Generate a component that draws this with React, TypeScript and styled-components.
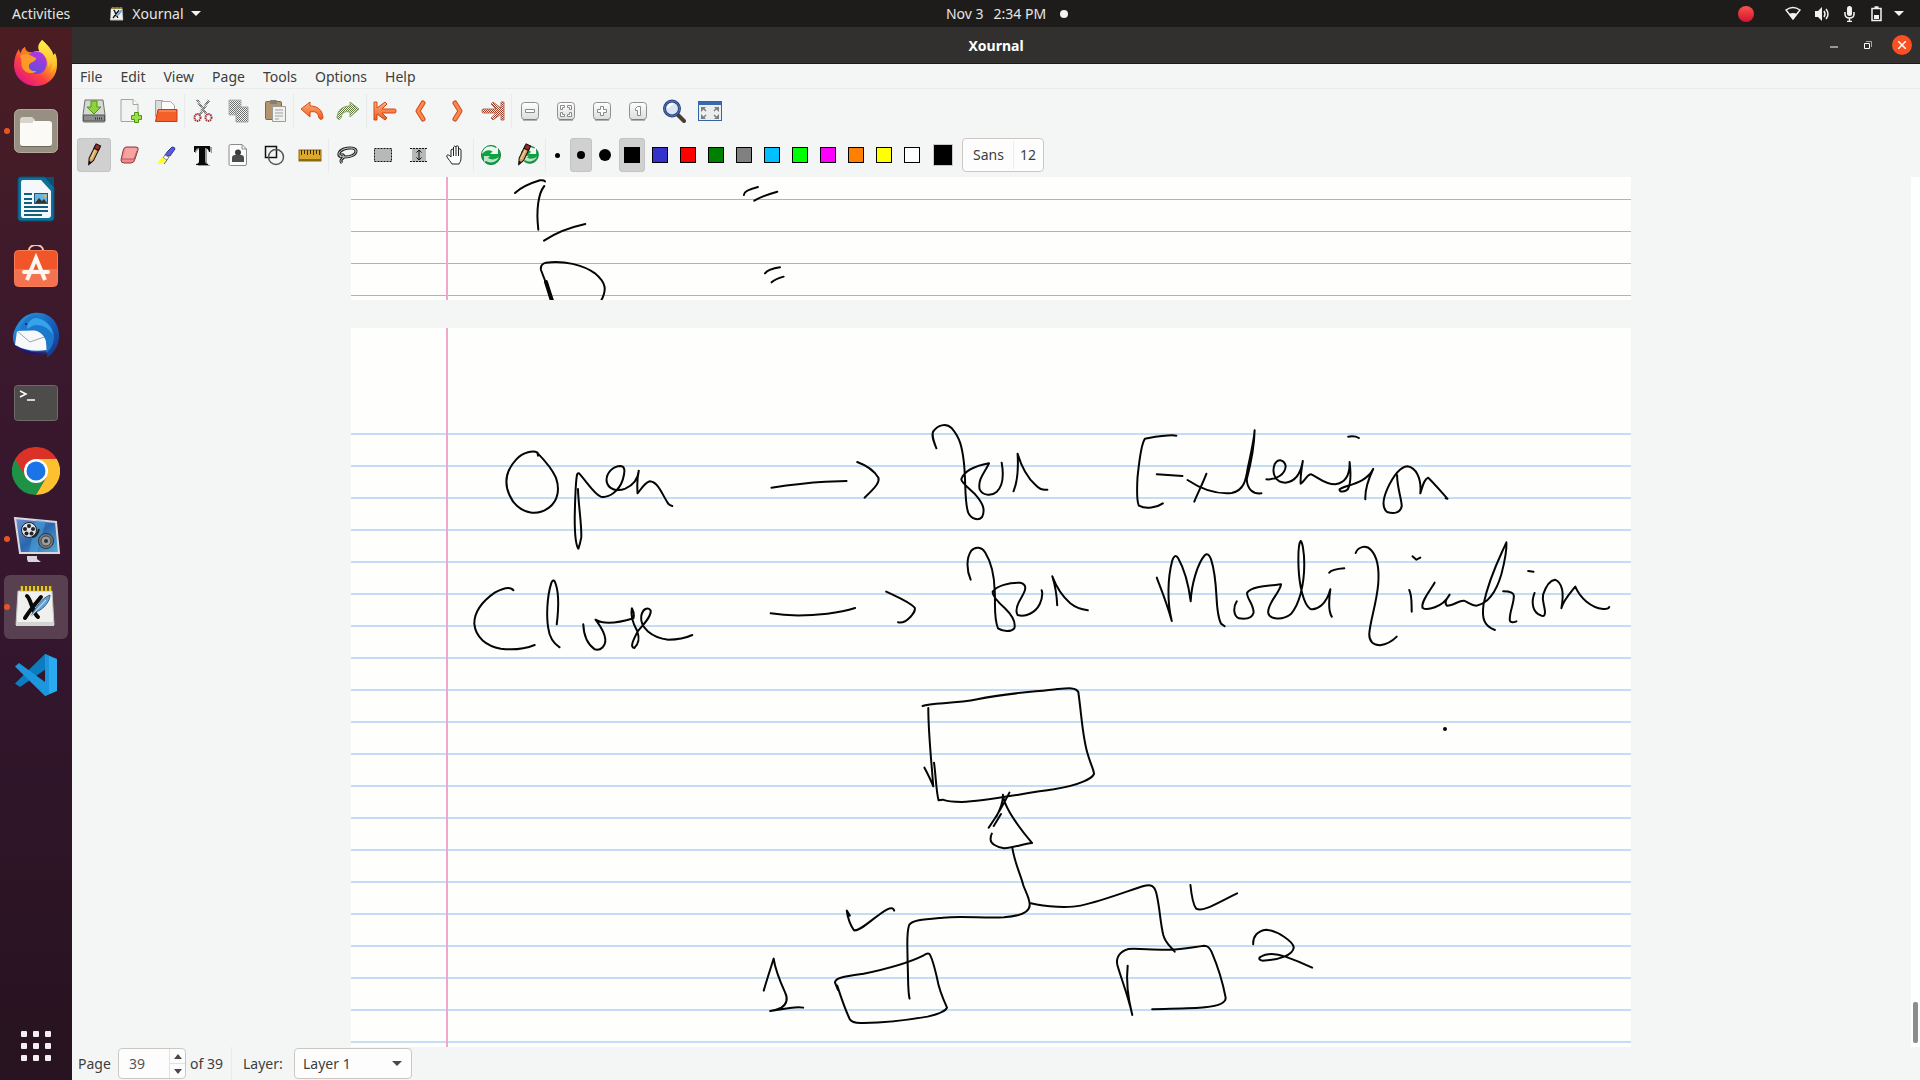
import React from "react";
import styled, { createGlobalStyle } from "styled-components";

const GlobalStyle = createGlobalStyle`
  * { box-sizing: border-box; }
  html, body, #root { height: 100%; margin: 0; }
  body { overflow: hidden; background: #f4f6f6; }
  body, button, input, select {
    font-family: "Noto Sans", "Open Sans", sans-serif;
    font-size: 14px;
    color: #3d3d3d;
  }
  button { border: 0; padding: 0; background: none; }
  svg { display: block; flex: none; }
`;

const Desktop = styled.div`
  height: 100%;
  display: flex;
  flex-direction: column;
`;

const TopBar = styled.header`
  height: 27px;
  flex: none;
  display: grid;
  grid-template-columns: minmax(0, 1fr) auto minmax(0, 1fr);
  align-items: center;
  padding: 0 16px 0 12px;
  background: #1d1c1a;
`;

const TopButton = styled.button`
  display: flex;
  align-items: center;
  gap: 7px;
  line-height: 20px;
  color: #e6e6e4;
`;

const TopLeft = styled.div`
  display: flex;
  gap: 39px;
`;

const Clock = styled(TopButton)`
  gap: 10px;
  margin-left: 98px;
`;

const Tray = styled.div`
  display: flex;
  justify-content: flex-end;
  align-items: center;
  gap: 8px;
`;

const RecordDot = styled.span`
  width: 16px;
  height: 16px;
  margin-right: 22px;
  border-radius: 50%;
  background: linear-gradient(#f8544f, #d3122c);
`;

const NoticeDot = styled.span`
  width: 8px;
  height: 8px;
  margin-left: 4px;
  border-radius: 50%;
  background: #f2f2f0;
`;

const Workspace = styled.div`
  flex: 1;
  min-height: 0;
  display: flex;
`;

const Dock = styled.nav`
  width: 72px;
  flex: none;
  display: flex;
  flex-direction: column;
  align-items: center;
  gap: 4px;
  padding: 4px 4px 2px;
  background: linear-gradient(#4b1d22 0%, #431b28 14%, #3a182d 32%, #33162d 60%, #27131f 100%);
`;

const DockItem = styled.button<{ $active?: boolean; $running?: boolean }>`
  position: relative;
  width: 64px;
  height: 64px;
  flex: none;
  display: grid;
  place-items: center;
  border-radius: 6px;
  background: ${(p) => (p.$active ? "#584050" : "transparent")};
  &::before {
    content: "";
    display: ${(p) => (p.$running ? "block" : "none")};
    position: absolute;
    left: 0;
    top: 29px;
    width: 6px;
    height: 6px;
    border-radius: 50%;
    background: #e95420;
  }
`;

const DockSpacer = styled.div`
  flex: 1;
`;

const Window = styled.main`
  flex: 1;
  min-width: 0;
  display: flex;
  flex-direction: column;
  background: #f4f6f6;
`;

const TitleBar = styled.div`
  height: 37px;
  flex: none;
  display: grid;
  grid-template-columns: 1fr auto 1fr;
  align-items: center;
  padding: 0 8px;
  background: #32302f;
  border-bottom: 1px solid #1c1b1a;
`;

const Title = styled.h1`
  grid-column: 2;
  margin: 0;
  padding-top: 2px;
  font-size: 14px;
  line-height: 20px;
  font-weight: 700;
  color: #fff;
`;

const WindowButtons = styled.div`
  display: flex;
  justify-content: flex-end;
  align-items: center;
  gap: 14px;
`;

const WindowButton = styled.button<{ $close?: boolean }>`
  width: 20px;
  height: 20px;
  display: grid;
  place-items: center;
  border-radius: 50%;
  background: ${(p) => (p.$close ? "#fa5022" : "transparent")};
`;

const MenuBar = styled.nav`
  height: 25px;
  flex: none;
  display: flex;
  align-items: center;
  gap: 18px;
  padding: 2px 8px 0;
  border-bottom: 1px solid #e9ebeb;
`;

const MenuItem = styled.button`
  line-height: 20px;
`;

const Toolbar = styled.div`
  height: 44px;
  flex: none;
  display: flex;
  align-items: center;
  padding: 0 4px;
`;

const ToolButton = styled.button<{ $active?: boolean; $width?: number }>`
  width: ${(p) => p.$width ?? 34}px;
  height: 34px;
  flex: none;
  margin: 0 1px;
  display: grid;
  place-items: center;
  border-radius: 4px;
  background: ${(p) => (p.$active ? "#d0d0d0" : "transparent")};
  box-shadow: ${(p) => (p.$active ? "inset 0 0 0 1px #c4c4c4" : "none")};
`;

const Separator = styled.span<{ $flush?: boolean }>`
  width: 1px;
  height: 34px;
  margin-right: ${(p) => (p.$flush ? -1 : 0)}px;
  background: #e9ebeb;
`;

const Swatches = styled.div`
  display: flex;
  margin: 0 7px 0 1px;
`;

const Swatch = styled.span<{ $color: string }>`
  width: 16px;
  height: 16px;
  border: 1px solid #000;
  background: ${(p) => p.$color};
`;

const ColorButton = styled.button`
  width: 20px;
  height: 22px;
  border: 1px solid #c9c9c9;
  background: #000;
`;

const Dot = styled.span<{ $size: number }>`
  width: ${(p) => p.$size}px;
  height: ${(p) => p.$size}px;
  border-radius: 50%;
  background: #000;
`;

const FontButton = styled.button`
  height: 34px;
  margin-left: 9px;
  display: flex;
  align-items: center;
  border: 1px solid #cdc7c2;
  border-radius: 4px;
  background: #fdfdfd;
  span { padding: 0 7px 0 6px; line-height: 28px; }
  span:first-child { padding: 0 9px 0 10px; border-right: 1px solid #ececec; }
`;

const Body = styled.section`
  flex: 1;
  min-height: 0;
  display: flex;
`;

const Pages = styled.div`
  flex: 1;
  min-width: 0;
  display: flex;
  flex-direction: column;
  align-items: center;
  gap: 28px;
  overflow: hidden;
`;

const Paper = styled.article<{ $tail?: boolean }>`
  position: relative;
  width: 1280px;
  max-width: 100%;
  overflow: hidden;
  flex: ${(p) => (p.$tail ? "0 0 123px" : "1")};
  background:
    linear-gradient(90deg, transparent 95px, #f2a6cb 95px, #f2a6cb 97px, transparent 97px),
    ${(p) =>
      p.$tail
        ? "repeating-linear-gradient(transparent 0 22px, #8bbddf 22px 23px, transparent 23px 32px)"
        : "repeating-linear-gradient(transparent 0 30px, #c4dcf4 30px 32px) 0 75px no-repeat"},
    #fefefd;
`;

const Ink = styled.svg`
  width: 100%;
  height: 100%;
  fill: none;
  stroke: #050505;
  stroke-width: 2;
  stroke-linecap: round;
  stroke-linejoin: round;
  path { vector-effect: non-scaling-stroke; }
`;

const Scrollbar = styled.div`
  width: 10px;
  flex: none;
  display: flex;
  flex-direction: column;
  justify-content: flex-end;
  padding: 0 0 4px 2px;
  border-left: 1px solid #f4f6f6;
  background: #fefefe;
`;

const ScrollThumb = styled.span`
  width: 5px;
  height: 41px;
  border-radius: 2px;
  background: #8c8c8c;
`;

const StatusBar = styled.footer`
  height: 33px;
  flex: none;
  display: flex;
  align-items: center;
  padding: 0 6px;
  line-height: 20px;
`;

const PageLabel = styled.label`
  width: 40px;
`;

const Spin = styled.div`
  width: 68px;
  height: 31px;
  display: flex;
  border: 1px solid #cdc7c2;
  border-radius: 4px;
  background: #fdfdfd;
  input { width: 50px; border: 0; padding: 0 10px; background: none; color: #555; outline: 0; }
`;

const SpinButtons = styled.div`
  flex: 1;
  display: flex;
  flex-direction: column;
  border-left: 1px solid #e4e2e0;
  button { flex: 1; display: grid; place-items: center; }
  button + button { border-top: 1px solid #e4e2e0; }
`;

const PageCount = styled.span`
  width: 45px;
  padding-left: 4px;
`;

const LayerLabel = styled.label`
  width: 62px;
  padding-left: 11px;
`;

const LayerBox = styled.div`
  position: relative;
  width: 118px;
  select {
    appearance: none;
    width: 100%;
    height: 31px;
    padding: 0 8px;
    border: 1px solid #cdc7c2;
    border-radius: 4px;
    background: #fdfdfd;
  }
  svg { position: absolute; right: 10px; top: 13px; pointer-events: none; }
`;

const Triangle = ({ up, w = 10, color = "#4a4a4a" }: { up?: boolean; w?: number; color?: string }) => (
  <svg width={w} height="5" viewBox="0 0 10 5" preserveAspectRatio="none">
    <path d={up ? "M0 5 5 0 10 5Z" : "M0 0 5 5 10 0Z"} fill={color} />
  </svg>
);

/* ---------- dock icons ---------- */

const Firefox = () => (
  <svg width="48" height="48" viewBox="0 0 48 48">
    <defs>
      <linearGradient id="ff1" x1=".85" y1=".1" x2=".2" y2=".95">
        <stop offset="0" stopColor="#fff44f" /><stop offset=".35" stopColor="#ffa21f" />
        <stop offset=".65" stopColor="#ff4240" /><stop offset="1" stopColor="#e21586" />
      </linearGradient>
      <linearGradient id="ff2" x1=".7" y1="0" x2=".3" y2="1">
        <stop offset="0" stopColor="#b833e1" /><stop offset="1" stopColor="#5b51d9" />
      </linearGradient>
      <linearGradient id="ff3" x1="0" y1="0" x2="0" y2="1">
        <stop offset="0" stopColor="#fff14a" /><stop offset="1" stopColor="#ffb02a" />
      </linearGradient>
    </defs>
    <path d="M7 10q0 3 2 4 1-4 4-6 0 4 3 5 4 1 8-1l6 0c0-5-1-8 0-11 3 3 7 6 9 10 2 2 2 4 2 5q2-1 2-2c2 4 2 8 2 12 0 12-9 21-21 21S2 38 2 26C2 20 4 14 7 10Z" fill="url(#ff1)" />
    <path d="M30 1c-4 4-5 8-2 12 6 3 9 8 8 15 2-2 3-4 3-6 2 4 1 8-1 12 6-5 8-12 5-19 0 1-1 2-2 2-1-7-6-11-11-16Z" fill="url(#ff3)" />
    <path d="M17 15c5-4 13-3 16 3 3 5 2 10-1 14-4 4-12 4-15-1-3-4-2-12 0-16Z" fill="url(#ff2)" />
    <path d="M8 17c4-3 8-2 12 0 2 2 5 1 4 3-1 3-6 3-7 6-1 4 3 7 8 6-5 4-13 2-15-4-1-4 0-7-2-11Z" fill="#ff9a2a" />
    <path d="M13 8q-4 2-4 7c4-2 8-2 12 2l-4-4q-4-1-4-5Z" fill="#ff7a1a" />
  </svg>
);

const Files = () => (
  <svg width="44" height="44" viewBox="0 0 44 44">
    <rect x=".5" y=".5" width="43" height="43" rx="5" fill="#978f81" stroke="#b4ab9c" />
    <path d="M6 11q0-3 3-3h9l3 3v4H6Z" fill="#d8d3cb" />
    <rect x="6" y="12" width="32" height="25" rx="3" fill="#fbfaf6" />
    <path d="M6 14v-2h9l4-1v3Z" fill="#d8d3cb" />
    <path d="M7 37.500h30" stroke="#6f685d" />
  </svg>
);

const Writer = () => (
  <svg width="38" height="46" viewBox="0 0 38 46">
    <path d="M4 1h24l9 10v31q0 3-3 3H4q-3 0-3-3V4q0-3 3-3Z" fill="#0e6f98" stroke="#0b4f70" />
    <path d="M28 1h9v10Z" fill="#0a5272" />
    <path d="M6 4h18l10 11v24q0 3-3 3H6q-2 0-2-3V6q0-2 2-2Z" fill="#f4f8fa" />
    <path d="M7 18h8M7 23h8M7 27h8M7 31h24M7 35h24M7 39h18" stroke="#11607f" strokeWidth="2" />
    <rect x="17" y="17" width="14" height="11" fill="#16607e" />
    <rect x="18" y="18" width="12" height="9" fill="#68b6de" />
    <path d="m18 27 4-5 3 3 2-2 3 4Z" fill="#333" /><circle cx="28" cy="20" r="1.500" fill="#f4b13c" />
  </svg>
);

const Software = () => (
  <svg width="44" height="44" viewBox="0 0 44 44">
    <path d="M15 6V5a7 5 0 0 1 14 0v1" fill="none" stroke="#f1c9a8" strokeWidth="2" />
    <rect x=".5" y="5.500" width="43" height="36" rx="4" fill="#f0562a" stroke="#f77d56" />
    <path d="M1 24h42v14q0 3-3 3H4q-3 0-3-3Z" fill="#f37350" />
    <path d="m13 35 9-22 9 22" fill="none" stroke="#fff7ef" strokeWidth="4" />
    <rect x="8" y="25" width="28" height="4" rx="2" fill="#fff7ef" />
  </svg>
);

const Thunderbird = () => (
  <svg width="48" height="48" viewBox="0 0 48 48">
    <defs>
      <linearGradient id="tb" x1="0" y1="0" x2="1" y2="1">
        <stop offset="0" stopColor="#2aa3e6" /><stop offset=".5" stopColor="#1565bf" /><stop offset="1" stopColor="#1b2f86" />
      </linearGradient>
    </defs>
    <path d="M8 10C18-2 36 0 43 11c8 12 4 29-9 36 2-3 1-5 1-5C24 46 6 42 2 32-1 25 3 16 8 10Z" fill="url(#tb)" />
    <path d="m5 20 28-1 2 20q-18 3-32-5Z" fill="#f7f8fa" />
    <path d="m5 20 13 11 17-6" fill="none" stroke="#9aa4b0" />
    <path d="M9 18C10 9 18 3 26 4l-2 3c10 0 18 9 18 18 0 9-4 14-8 17 2-9 0-18-9-22-5-2-11-2-16-2Z" fill="#1b78cd" />
    <path d="M24 7c9 1 16 8 17 17-4-7-10-10-17-10-4 0-6 3-9 4 0-6 4-11 9-11Z" fill="#36a4e8" />
    <circle cx="14" cy="13" r="1" fill="#0b2145" />
    <path d="M3 34c8 5 20 9 32 7-8 5-25 4-32-7Z" fill="#2c1464" />
  </svg>
);

const Terminal = () => (
  <svg width="44" height="36" viewBox="0 0 44 36">
    <rect x=".5" y=".5" width="43" height="35" rx="3" fill="#4d4c4a" stroke="#6d6b69" />
    <path d="m6 6 6 3-6 3M13 15h8" fill="none" stroke="#fff" strokeWidth="1.500" />
  </svg>
);

const Chrome = () => (
  <svg width="48" height="48" viewBox="0 0 48 48">
    <path d="M24 24 3.200 12A24 24 0 0 0 24 48l10-18Z" fill="#1e9247" />
    <path d="M24 12h20.800A24 24 0 0 1 24 48l10.400-18Z" fill="#fdc02f" />
    <path d="M3.200 12A24 24 0 0 1 44.800 12H24L13.600 30Z" fill="#dc3127" />
    <circle cx="24" cy="24" r="12" fill="#fff" /><circle cx="24" cy="24" r="9.500" fill="#1b73e8" />
  </svg>
);

const Kazam = () => (
  <svg width="48" height="48" viewBox="0 0 48 48">
    <defs>
      <linearGradient id="kz" x1="0" y1="0" x2="1" y2="1">
        <stop offset="0" stopColor="#6d95d4" /><stop offset=".5" stopColor="#2b66ad" /><stop offset="1" stopColor="#58b1de" />
      </linearGradient>
    </defs>
    <path d="m3 3 41 4 3 31H8Z" fill="url(#kz)" stroke="#dcd7dc" strokeWidth="2" />
    <path d="m24 5 10 1-9 31h-8Z" fill="#4ea8dd" opacity=".5" />
    <circle cx="17" cy="15" r="7.500" fill="#dfe3ea" stroke="#222" />
    <g fill="#222"><circle cx="17" cy="11" r="2" /><circle cx="13" cy="14" r="2" /><circle cx="14.500" cy="18.500" r="2" /><circle cx="19.500" cy="18.500" r="2" /><circle cx="21" cy="14" r="2" /></g>
    <path d="M20 22q5 0 7-8" fill="none" stroke="#222" strokeWidth="2" />
    <circle cx="34" cy="26" r="7.500" fill="#747a80" stroke="#333" /><circle cx="34" cy="26" r="5" fill="#999fa5" stroke="#444" /><circle cx="34" cy="26" r="2" fill="#333" />
    <path d="M15 41h10v3l4 3H16l-1-3Z" fill="#d9d4d9" />
  </svg>
);

const Xournal = ({ size = 48 }: { size?: number }) => (
  <svg width={size} height={size} viewBox="0 0 48 48">
    <path d="M6 8h34l2 34H4Z" fill="#f0f0ef" stroke="#c3c1c0" />
    <path d="M4 39h38v4H4Z" fill="#d4d4d3" />
    <path d="M10 3v5M14 3v5M18 3v5M22 3v5M26 3v5M30 3v5M34 3v5M38 3v5" stroke="#e5c51f" strokeWidth="2.500" />
    <path d="M12 3v5M16 3v5M20 3v5M24 3v5M28 3v5M32 3v5M36 3v5" stroke="#4e430c" />
    <path d="M15 13c4 3 5 16 11 21M29 14C24 20 18 27 13 35" fill="none" stroke="#090909" strokeWidth="4" strokeLinecap="round" />
    <path d="M19 33C24 24 30 15 38 12c0 6-6 14-14 17Z" fill="#6aa3d2" stroke="#2d5b86" />
    <path d="m19 33 15-16" stroke="#d8ebfa" />
  </svg>
);

const VsCode = () => (
  <svg width="44" height="44" viewBox="0 0 44 44">
    <path d="M1 30.500 31 1l4 6v7L6 34Z" fill="#0c7cc0" />
    <path d="M1 13.500 5 10l30 22v6l-4 5Z" fill="#1c96dc" />
    <path d="m31 1 12 5v32l-12 5Z" fill="#2aaaf0" />
    <path d="m31 1 4 2v38l-4 2Z" fill="#1c96dc" />
  </svg>
);

const AppGrid = () => (
  <svg width="30" height="30" viewBox="0 0 30 30" fill="#f7eef2">
    {[0, 12, 24].map((y) => [0, 12, 24].map((x) => <rect key={`${x}-${y}`} x={x} y={y} width="6" height="6" rx="1" />))}
  </svg>
);

/* ---------- toolbar icons ---------- */

const Icon = ({ children }: { children: React.ReactNode }) => (
  <svg width="24" height="24" viewBox="0 0 24 24" fill="none">{children}</svg>
);

const PatternSheet = styled.svg`
  position: absolute;
`;

const Patterns = () => (
  <PatternSheet width="0" height="0" aria-hidden="true">
    <defs>
      {[["ditherGray", "#6b6b6b"], ["ditherGreen", "#5d7a3a"], ["ditherRed", "#9c3a22"]].map(([id, c]) => (
        <pattern key={id} id={id} width="2" height="2" patternUnits="userSpaceOnUse">
          <rect width="1" height="1" fill={c} /><rect x="1" y="1" width="1" height="1" fill={c} />
        </pattern>
      ))}
      <linearGradient id="orange" x1="0" y1="0" x2="0" y2="1"><stop offset="0" stopColor="#fcb27a" /><stop offset="1" stopColor="#f0581c" /></linearGradient>
      <linearGradient id="keycap" x1="0" y1="0" x2="0" y2="1"><stop offset="0" stopColor="#fff" /><stop offset="1" stopColor="#dcdcdc" /></linearGradient>
    </defs>
  </PatternSheet>
);

const Save = () => (
  <Icon>
    <path d="M3 1h18l2 15v6q0 1-1 1H2q-1 0-1-1v-6Z" fill="#d6d8d5" stroke="#6e706d" />
    <path d="M1.500 16h21v6h-21Z" fill="#8b8e8a" stroke="#555" /><path d="M13 19.500h7" stroke="#333" strokeWidth="2" strokeDasharray="1 1" />
    <path d="M9 2h6v6h4l-7 7-7-7h4Z" fill="#8fd13f" stroke="#4c9a06" />
  </Icon>
);
const NewPage = () => (
  <Icon>
    <path d="M3 .5h12l5 5v17H3Z" fill="#f3f3f2" stroke="#a3a5a1" /><path d="M15 .5v5h5" fill="#fff" stroke="#a3a5a1" />
    <path d="M16.500 13.500h4v3h3v4h-3v3h-4v-3h-3v-4h3Z" fill="#9edb4e" stroke="#4e9a06" />
  </Icon>
);
const Open = () => (
  <Icon>
    <path d="M1.500 1.500h7l1 2h8v14h-16Z" fill="#dcdcda" stroke="#a3a3a1" /><path d="M7.500 2.500h9l4 4v6h-13Z" fill="#fafafa" stroke="#a9a9a7" />
    <path d="M4 10.500h19v12H1.500Z" fill="#f5602a" stroke="#c43d10" /><path d="M5 12h17" stroke="#fba27f" />
  </Icon>
);
const Cut = () => (
  <Icon>
    <path d="m6 1 9 14M18 1 9 15" stroke="url(#ditherGray)" strokeWidth="3" />
    <path d="m6 1 9 14M18 1 9 15" stroke="#8d8d8d" />
    <ellipse cx="6.500" cy="18.500" rx="3" ry="3.500" stroke="#a0383c" strokeWidth="2" strokeDasharray="1.500 .6" /><ellipse cx="17.500" cy="18.500" rx="3" ry="3.500" stroke="#a0383c" strokeWidth="2" strokeDasharray="1.500 .6" />
  </Icon>
);
const Copy = () => (
  <Icon>
    <path d="M2 1h12v15H2Z" fill="url(#ditherGray)" stroke="#b5b5b5" />
    <path d="M9 8h12v15H9Z" fill="#f4f6f6" /><path d="M9 8h12v15H9Z" fill="url(#ditherGray)" stroke="#a5a5a5" />
  </Icon>
);
const Paste = () => (
  <Icon>
    <rect x="2.500" y="2.500" width="16" height="18" rx="1" fill="#b6946b" stroke="#84643d" /><rect x="7" y="1" width="7" height="4" rx="1" fill="#7f7f7d" />
    <path d="M9.500 7.500h13v15h-13Z" fill="#f1f1f0" stroke="#9b9d99" /><path d="M12 11h8M12 14h8M12 17h8M12 20h4" stroke="#9fa19d" />
  </Icon>
);
const arrowBack = "M10 3 1 10l9 8v-5c5-1 8 0 9 6 1 2 4 2 4-1-1-7-5-11-13-11Z";
const Undo = () => <Icon><path d={arrowBack} fill="url(#orange)" stroke="#d2481b" strokeLinejoin="round" /></Icon>;
const Redo = () => <Icon><g transform="matrix(-1 0 0 1 24 0)"><path d={arrowBack} fill="url(#ditherGreen)" stroke="#8ba06e" strokeLinejoin="round" /></g></Icon>;
const First = () => <Icon><path d="M1 3h3v6l8-6 2 2-5 5h13q1 0 1 2t-1 2H9l5 5-2 2-8-6v6H1Z" fill="url(#orange)" stroke="#d2481b" strokeLinejoin="round" /></Icon>;
const Last = () => <Icon><path d="M23 3h-3v6l-8-6-2 2 5 5H2q-1 0-1 2t1 2h13l-5 5 2 2 8-6v6h3Z" fill="url(#ditherRed)" stroke="#b3705c" strokeLinejoin="round" /></Icon>;
const Prev = () => <Icon><path d="m14 4-5 8 5 8" stroke="#d2481b" strokeWidth="5" strokeLinecap="round" strokeLinejoin="round" /><path d="m14 4-5 8 5 8" stroke="#f98a4d" strokeWidth="3" strokeLinecap="round" strokeLinejoin="round" /></Icon>;
const Next = () => <Icon><path d="m10 4 5 8-5 8" stroke="#d2481b" strokeWidth="5" strokeLinecap="round" strokeLinejoin="round" /><path d="m10 4 5 8-5 8" stroke="#f98a4d" strokeWidth="3" strokeLinecap="round" strokeLinejoin="round" /></Icon>;
const KeyCap = ({ children }: { children: React.ReactNode }) => (
  <Icon>
    <rect x="3.500" y="3.500" width="17" height="17" rx="3" fill="url(#keycap)" stroke="#8f8f8f" /><path d="M5 21h14" stroke="#6d6d6d" />
    <g fill="#fff" stroke="#8a8a8a">{children}</g>
  </Icon>
);
const ZoomOut = () => <KeyCap><path d="M7.500 10.500h9v3h-9Z" /></KeyCap>;
const ZoomFit = () => <KeyCap><path d="M6.500 6.500h4v2h-2v2h-2ZM17.500 6.500h-4v2h2v2h2ZM6.500 17.500h4v-2h-2v-2h-2ZM17.500 17.500h-4v-2h2v-2h2Z" /></KeyCap>;
const ZoomIn = () => <KeyCap><path d="M10.500 7.500h3v3h3v3h-3v3h-3v-3h-3v-3h3Z" /></KeyCap>;
const ZoomOne = () => <KeyCap><path d="M11.500 7.500h3v9h-3v-5h-2v-2Z" /></KeyCap>;
const Magnifier = () => (
  <Icon>
    <path d="m15 15 7 7" stroke="#4a4038" strokeWidth="4" strokeLinecap="round" /><circle cx="10" cy="9.500" r="7.500" fill="#dbe6f2" stroke="#22407c" strokeWidth="3" />
    <circle cx="10" cy="9.500" r="7.500" stroke="#5c7fc0" /><path d="M6 9q1-4 5-4" stroke="#fff" strokeWidth="2" />
  </Icon>
);
const FullScreen = () => (
  <Icon>
    <rect x=".5" y="2.500" width="23" height="19" fill="#eceeee" stroke="#3465a4" /><path d="M1 3h22v3H1Z" fill="#3868ae" />
    <g fill="#7d7f7c"><path d="M3 8h5L6.500 9.500l2 2-1 1-2-2L3 13ZM21 8h-5l1.500 1.500-2 2 1 1 2-2L21 13ZM3 20h5l-1.500-1.500 2-2-1-1-2 2L3 15ZM21 20h-5l1.500-1.500-2-2 1-1 2 2L21 15Z" /></g>
  </Icon>
);
const pencil = (
  <g transform="rotate(26 12 12)">
    <path d="M9 3h5v14l-2.500 6L9 17Z" fill="#d9a55b" stroke="#111" /><path d="M9 1h5v5H9Z" fill="#9b2b25" stroke="#111" />
    <path d="M11 7v10" stroke="#f7d9a5" /><path d="M10 19.500h3l-1.500 4Z" fill="#111" />
  </g>
);
const Pen = () => <Icon>{pencil}</Icon>;
const Eraser = () => <Icon><path d="M8 4h10q3 0 2 3l-3 9q-1 4-4 4H6q-3 0-3-3l2-9q1-4 3-4Z" fill="#f08b8b" stroke="#8c3b3b" /><path d="M8 5h10q2 1 1 2l-3 9H5l2-8Z" fill="#f7a3a3" /><path d="m19 8-3 8H4" stroke="#b65858" /></Icon>;
const Highlighter = () => <Icon><path d="m14 8 4-4q3 0 3 2l-5 7-5-1Z" fill="#5a5ae0" stroke="#33338c" /><path d="m11 12 4 2-2 3-4-2Z" fill="#f7f7f7" stroke="#777" /><path d="m8 14 4 3-4 3-5 1 2-3Z" fill="#ffff18" /><path d="m13 17-3 4" stroke="#555" /></Icon>;
const TextTool = () => <Icon><path d="M4 3h17v6h-1q-1-4-4-4v13q0 3 3 3v1H7v-1q3 0 3-3V5q-4 0-5 4H4Z" fill="#999" transform="translate(1 1)" /><path d="M4 3h16v6h-1q-1-4-4-4v13q0 3 3 3v1H6v-1q3 0 3-3V5Q6 5 5 9H4Z" fill="#080808" /></Icon>;
const ImageTool = () => <Icon><path d="M4.500 1.500H16l4.500 4.500v15q0 1.500-1.500 1.500H4.500q-1.500 0-1.500-1.500V3q0-1.500 1.500-1.500Z" fill="#fbfbfb" stroke="#8b8b8b" /><path d="M16 1.500V6h4.500" stroke="#8b8b8b" /><circle cx="12" cy="9.500" r="3" fill="#3b3b3b" /><path d="M6 19v-4q0-3 3-3h6q3 0 3 3v4Z" fill="#4c4c4c" /></Icon>;
const Shapes = () => <Icon><rect x="3.500" y="3.500" width="11" height="11" stroke="#111" strokeWidth="1.500" /><circle cx="14" cy="14" r="7.500" stroke="#555" strokeWidth="1.500" /></Icon>;
const Ruler = () => <Icon><rect x="1" y="7" width="22" height="11" fill="#dba92e" stroke="#8b6a10" /><path d="M3.500 7v5M6.500 7v4M9.500 7v5M12.500 7v4M15.500 7v5M18.500 7v4M21.500 7v5" stroke="#3d2e05" /><path d="M1 17h22" stroke="#8b6a10" strokeWidth="2" /></Icon>;
const lassoPath = "M6 14C2 12 4 8 9 6c6-2 12-1 12 2 0 4-6 6-11 6-4 0-6-1-4-2s4 1 2 3-3 3-1 5";
const Lasso = () => <Icon><path d={lassoPath} stroke="#222" strokeWidth="3" /><path d={lassoPath} stroke="#d8d8d8" /></Icon>;
const SelectRect = () => <Icon><rect x="3.500" y="5.500" width="17" height="13" fill="#b8b8b8" stroke="#111" strokeDasharray="2 1" /></Icon>;
const VSpace = () => <Icon><rect x="5" y="5" width="14" height="14" fill="#b8b8b8" /><path d="M3 5.500h18M3 18.500h18" stroke="#111" strokeDasharray="2 1" /><path d="M12 7v10M9.500 9.500 12 7l2.500 2.500M9.500 14.500 12 17l2.500-2.500" stroke="#111" /></Icon>;
const Hand = () => <Icon><path d="M9 21c-2-3-3-4-5-7-1-2 1-3 3-1l1 1V7q1-2 2.500 0V4q1-2 2.500 0v-.5q1-1.500 2.500 0V6q2-1 2.500 1v8c0 3-1 4-2 6Z" fill="#fff" stroke="#222" strokeLinejoin="round" /><path d="M10.500 7v6M13 4v9M15.500 6v7" stroke="#222" /></Icon>;
const recycle = (
  <>
    <circle cx="12" cy="12" r="9.500" fill="#12a045" stroke="#0c7a34" />
    <path d="M3 11C4 4 11 1 17 5l2-2v8h-8l2.500-2.500C10 6 6 7 3 11Z" fill="#eaf8ee" />
    <path d="M20 14c-2 5-8 7-13 4l-2 1v-6h6l-2 2c3 2 7 2 11-1Z" fill="#bfe6ca" />
  </>
);
const DefaultPen = () => <Icon>{recycle}</Icon>;
const DefaultTool = () => <Icon><g transform="translate(4 1) scale(.9)">{recycle}</g><g transform="translate(-3 0)">{pencil}</g></Icon>;

const toolbarTop: (React.FC | "sep")[] = [Save, NewPage, Open, "sep", Cut, Copy, Paste, "sep", Undo, Redo, "sep", First, Prev, Next, Last, "sep", ZoomOut, ZoomFit, ZoomIn, ZoomOne, Magnifier, FullScreen];
const toolbarTools: (React.FC | "sep")[] = [Pen, Eraser, Highlighter, TextTool, ImageTool, Shapes, Ruler, "sep", Lasso, SelectRect, VSpace, Hand, "sep", DefaultPen, DefaultTool, "sep"];
const palette = ["#000000", "#3333cc", "#ff0000", "#008000", "#808080", "#00c0ff", "#00ff00", "#ff00ff", "#ff8000", "#ffff00", "#ffffff"];
const menus = ["File", "Edit", "View", "Page", "Tools", "Options", "Help"];

/* ---------- handwriting ---------- */

const headingInk = [
  "M191 134 190 125C180 118 155 122 138 145 110 182 105 225 130 272 155 310 190 315 218 290 240 270 245 235 235 200 222 165 205 145 188 124",
  "M289 234C290 280 299 350 297 380Q294 400 290 413C282 400 281 360 281 320 282 260 283 210 287 190Q290 184 294 190C315 220 330 250 345 257 365 262 390 240 399 205 405 180 404 166 394 165 375 165 358 185 359 210 362 235 385 243 405 233 425 222 436 205 438 179 434 200 434 230 435 247 442 238 452 215 465 211 485 212 495 250 510 278Q514 284 520 285",
  "M763 230C800 223 850 215 895 212L947 210M973 153C1000 165 1015 180 1025 200 1028 212 1022 225 991 260",
  "M1167 112C1160 90 1155 75 1159 62 1170 42 1190 35 1205 52 1225 80 1230 110 1234 150 1240 210 1235 270 1245 305 1252 325 1270 330 1279 318 1288 295 1280 275 1262 250 1245 230 1228 215 1228 205 1235 180 1260 165 1296 157 1285 185 1268 205 1273 235 1280 252 1300 258 1315 242 1330 225 1332 190 1327 155",
  "M1356 241C1365 215 1368 170 1366 128 1375 165 1390 200 1410 222 1420 235 1430 238 1439 236",
  "M131 538C125 528 110 528 85 545 50 575 35 605 35 638 38 680 65 705 100 713 130 718 160 713 183 702",
  "M237 640C242 590 243 540 232 511Q228 504 224 515C212 560 212 620 216 650 219 680 230 698 244 709",
  "M302 640C303 670 312 700 330 715 345 720 357 705 356 685 354 660 340 640 332 626 350 640 385 637 425 622Q428 608 421 592C417 615 425 640 434 660 440 680 440 695 427 711 415 710 425 685 436 660 450 640 470 615 467 598 460 588 448 592 444 615 440 650 470 680 510 686 535 686 555 680 569 672",
  "M761 607C800 615 850 615 900 608Q940 602 968 591M1044 542C1075 560 1100 572 1114 590 1118 600 1095 640 1073 634",
  "M1251 506C1240 475 1241 440 1252 420 1262 405 1278 407 1287 425 1302 455 1309 500 1310 540 1312 580 1307 620 1318 652 1330 662 1350 664 1358 652 1363 630 1350 610 1335 592 1315 570 1303 552 1305 542 1315 525 1345 514 1372 515 1392 520 1385 540 1375 560 1365 580 1360 600 1366 612 1385 620 1410 605 1420 580 1427 560 1427 545 1425 538",
  "M1463 583C1462 550 1457 520 1451 496 1460 525 1475 555 1495 577 1510 592 1525 596 1538 598",
];

const subjectInk = [
  "M270 74C250 70 215 77 182 83 170 100 165 160 161 200 159 240 158 270 165 284 185 296 215 290 232 277M215 190 287 195",
  "M301 207C340 235 385 250 425 246 460 238 465 205 470 170 478 130 487 90 489 58 488 110 478 160 467 205 468 235 485 250 508 247M354 188C345 215 330 245 320 272",
  "M522 205C550 207 575 190 576 165 572 145 555 142 545 160 535 190 550 215 575 215 600 212 618 190 624 150 620 175 617 205 618 218 630 210 635 190 648 190 665 198 685 220 715 220 745 215 756 190 755 153 758 180 760 215 750 235 740 245 725 243 727 235 740 222 800 220 821 174 805 210 798 240 799 265M751 77Q770 74 781 81",
  "M888 193C888 230 900 260 901 285 898 305 880 310 860 303 845 290 848 265 860 235 875 200 895 168 917 166 940 170 957 200 953 247 960 225 963 205 975 200 990 215 1010 240 1029 263L1024 262",
  "M215 500C225 530 240 565 257 630 243 570 246 500 258 450Q266 425 275 442C295 480 305 530 310 571 312 520 330 455 350 432Q360 424 367 445C390 520 375 600 395 638L405 646",
  "M439 571C428 590 430 615 445 622 465 625 482 622 486 605 487 580 465 560 468 545 480 527 520 525 563 520 560 545 525 575 527 605 530 625 565 630 590 610 615 580 628 520 628 460 628 420 622 392 618 390 610 400 611 440 612 470 614 520 625 580 645 594 665 598 690 580 701 535 697 565 695 600 705 617M698 485Q705 475 740 472",
  "M772 426C778 408 800 400 815 417 835 440 838 480 835 520 830 580 812 630 810 670 810 690 818 702 840 703 860 700 875 690 887 677",
  "M931 436 942 446 953 440M922 537C930 555 928 575 929 602",
  "M993 515C980 540 955 570 959 590 970 600 1015 590 1035 551 1025 565 1020 578 1027 584 1045 585 1060 568 1075 569 1090 575 1095 584 1110 584 1140 578 1165 545 1180 490 1192 440 1195 410 1194 394 1175 440 1145 500 1130 580 1125 620 1130 645 1162 657",
  "M1185 541C1200 541 1215 542 1215 555 1215 580 1200 610 1204 630 1208 637 1215 634 1222 631M1255 480 1270 482",
  "M1273 546C1262 575 1268 605 1290 613 1300 618 1303 612 1302 600 1300 580 1293 570 1297 550 1305 525 1315 508 1330 506 1350 515 1357 540 1348 592 1355 565 1370 550 1387 527 1400 560 1430 590 1465 594Q1480 595 1482 588",
];

const diagramInk = [
  "M477 138C500 128 560 132 620 118 700 98 780 95 830 87 860 84 878 82 884 96 893 170 895 230 908 280 915 310 925 330 925 342 920 355 890 375 820 388 740 400 640 424 580 426 555 426 540 424 530 419L519 421C513 400 512 350 507 308",
  "M492 144C492 220 500 300 505 379 497 355 490 340 482 323",
  "M704 398C690 430 670 470 650 503M687 404C690 440 720 490 763 549 740 552 715 563 690 565 670 562 655 550 655 540Q654 530 658 521M682 462 663 498M687 405Q688 430 670 470",
  "M712 566C718 610 735 650 740 675 748 700 757 715 757 735 757 755 735 768 690 772 640 775 580 768 530 773 480 778 450 780 442 795 434 820 438 860 438 910 440 960 438 990 443 1016",
  "M760 730C800 742 860 744 890 737 950 722 1020 690 1055 678 1075 672 1083 678 1088 700 1098 750 1097 780 1106 825 1112 850 1125 860 1136 875",
  "M287 767 279 752C281 775 290 800 298 811 315 815 350 770 385 748Q400 740 403 752",
  "M1177 675C1180 710 1185 735 1192 746 1210 757 1245 730 1299 700",
  "M62 992C70 960 80 925 88 896 92 930 105 965 118 998 125 1015 125 1030 108 1043Q95 1050 79 1053L130 1044Q155 1040 165 1043",
  "M254 977C262 1005 275 1050 287 1078Q292 1089 315 1089C380 1090 450 1078 490 1070 520 1062 538 1052 541 1043 530 1015 520 990 515 955 508 920 500 890 495 882Q490 878 480 886C430 915 370 930 320 942 270 950 250 953 248 967L256 990",
  "M1077 1048C1130 1046 1180 1046 1215 1042 1250 1038 1270 1028 1269 1013 1262 970 1245 910 1232 875Q1225 857 1213 857C1180 862 1150 870 1120 869 1080 870 1040 865 1015 867 990 875 982 895 986 915 1000 970 1015 1010 1025 1065 1015 1020 1008 970 1013 917",
  "M1341 853C1340 830 1352 812 1375 809 1405 812 1445 845 1447 862 1445 885 1410 900 1365 902Q1354 900 1358 892C1375 880 1400 880 1425 890 1450 900 1480 915 1495 923",
];

const previousInk = [
  "M225 69C240 55 270 40 300 31Q312 30 315 34M313 48C295 70 288 120 295 179M312 212C340 193 390 172 436 162",
  "M338 391 303 300Q300 283 318 278C370 270 430 285 465 310 500 340 500 360 484 391",
  "M912 75Q910 62 954 51M943 92Q965 78 1012 65M975 310Q985 297 1020 292M995 337Q1005 327 1031 320",
];

const Strokes = ({ paths, transform }: { paths: string[]; transform: string }) => (
  <g transform={transform}>{paths.map((d) => <path key={d} d={d} />)}</g>
);

const dockApps: { name: string; icon: React.ReactNode; running?: boolean; active?: boolean }[] = [
  { name: "Firefox", icon: <Firefox /> },
  { name: "Files", icon: <Files />, running: true },
  { name: "LibreOffice Writer", icon: <Writer /> },
  { name: "Ubuntu Software", icon: <Software /> },
  { name: "Thunderbird", icon: <Thunderbird /> },
  { name: "Terminal", icon: <Terminal /> },
  { name: "Chrome", icon: <Chrome /> },
  { name: "Kazam", icon: <Kazam />, running: true },
  { name: "Xournal", icon: <Xournal />, running: true, active: true },
  { name: "Visual Studio Code", icon: <VsCode /> },
];

export default function App() {
  return (
    <Desktop>
      <GlobalStyle />
      <Patterns />
      <TopBar>
        <TopLeft>
          <TopButton>Activities</TopButton>
          <TopButton>
            <Xournal size={16} />
            Xournal
            <Triangle color="#f2f2f0" />
          </TopButton>
        </TopLeft>
        <Clock>
          <span>Nov 3</span>
          <span>2:34 PM</span>
          <NoticeDot />
        </Clock>
        <Tray>
          <RecordDot />
          <svg width="20" height="16" viewBox="0 0 20 16" fill="#f2f2f0">
            <path d="M2 4q7-5 14 0L9 13Z" fill="none" stroke="#f2f2f0" strokeWidth="1.500" /><path d="M5 8q4-2 8 0l-4 5Z" />
          </svg>
          <svg width="20" height="16" viewBox="0 0 20 16" fill="#f2f2f0">
            <path d="M3 5h3l4-4v14l-4-4H3Z" /><path d="M12 5q2 3 0 6M14 3q4 5 0 10" fill="none" stroke="#f2f2f0" strokeWidth="1.500" />
          </svg>
          <svg width="18" height="16" viewBox="0 0 18 16" fill="#f2f2f0">
            <rect x="7" y="0" width="5" height="10" rx="2.500" /><path d="M5 6v2q0 4 4.500 4T14 8V6M9.500 12v3M7 15.500h5" fill="none" stroke="#f2f2f0" strokeWidth="1.500" />
          </svg>
          <svg width="20" height="16" viewBox="0 0 20 16" fill="#f2f2f0">
            <path d="M6 2.500h9v12H6ZM8.500 1h4" fill="none" stroke="#f2f2f0" strokeWidth="1.500" /><path d="M8 9h5v4H8Z" />
          </svg>
          <Triangle color="#f2f2f0" />
        </Tray>
      </TopBar>
      <Workspace>
        <Dock>
          {dockApps.map((app) => (
            <DockItem key={app.name} aria-label={app.name} $running={app.running} $active={app.active}>
              {app.icon}
            </DockItem>
          ))}
          <DockSpacer />
          <DockItem aria-label="Show Applications"><AppGrid /></DockItem>
        </Dock>
        <Window>
          <TitleBar>
            <Title>Xournal</Title>
            <WindowButtons>
              <WindowButton aria-label="Minimize"><svg width="8" height="6"><path d="M0 5h8" stroke="#fff" /></svg></WindowButton>
              <WindowButton aria-label="Restore">
                <svg width="8" height="8" viewBox="0 0 8 8" fill="none"><path d="M.5 2.500h5v5h-5Z" stroke="#fff" /><path d="M2 .5h5.500V6" stroke="#a5a5a5" /></svg>
              </WindowButton>
              <WindowButton aria-label="Close" $close><svg width="8" height="8"><path d="m0 0 8 8M8 0 0 8" stroke="#fff" strokeWidth="1.500" /></svg></WindowButton>
            </WindowButtons>
          </TitleBar>
          <MenuBar>
            {menus.map((m) => <MenuItem key={m}>{m}</MenuItem>)}
          </MenuBar>
          <Toolbar>
            {toolbarTop.map((Tool, i) => Tool === "sep" ? <Separator key={i} /> : <ToolButton key={i}><Tool /></ToolButton>)}
          </Toolbar>
          <Toolbar>
            {toolbarTools.map((Tool, i) => Tool === "sep" ? <Separator key={i} $flush={i > 7} /> : <ToolButton key={i} $active={i === 0}><Tool /></ToolButton>)}
            {[5, 8, 12].map((size) => (
              <ToolButton key={size} $width={22} $active={size === 8} aria-label={`Thickness ${size}`}><Dot $size={size} /></ToolButton>
            ))}
            <Swatches>
              {palette.map((c, i) => (
                <ToolButton key={c} $width={26} $active={i === 0} aria-label={c}><Swatch $color={c} /></ToolButton>
              ))}
            </Swatches>
            <ColorButton aria-label="Custom color" />
            <FontButton><span>Sans</span><span>12</span></FontButton>
          </Toolbar>
          <Body>
            <Pages>
              <Paper $tail>
                <Ink>
                  <Strokes paths={previousInk} transform="translate(89 -7) scale(.3333)" />
                  <path d="M195 105 201 124" strokeWidth="4" />
                </Ink>
              </Paper>
              <Paper>
                <Ink>
                  <Strokes paths={headingInk} transform="translate(109 83) scale(.4082 .3333)" />
                  <Strokes paths={subjectInk} transform="translate(729 83) scale(.3571 .3333)" />
                  <Strokes paths={diagramInk} transform="translate(389 332) scale(.3827 .3333)" />
                  <circle cx="1094" cy="401" r="1" fill="#050505" strokeWidth="2" />
                </Ink>
              </Paper>
            </Pages>
            <Scrollbar><ScrollThumb /></Scrollbar>
          </Body>
          <StatusBar>
            <PageLabel htmlFor="page">Page</PageLabel>
            <Spin>
              <input id="page" defaultValue="39" />
              <SpinButtons>
                <button aria-label="Next page"><Triangle up w={8} /></button>
                <button aria-label="Previous page"><Triangle w={8} /></button>
              </SpinButtons>
            </Spin>
            <PageCount>of 39</PageCount>
            <Separator />
            <LayerLabel htmlFor="layer">Layer:</LayerLabel>
            <LayerBox>
              <select id="layer"><option>Layer 1</option></select>
              <Triangle />
            </LayerBox>
          </StatusBar>
        </Window>
      </Workspace>
    </Desktop>
  );
}
